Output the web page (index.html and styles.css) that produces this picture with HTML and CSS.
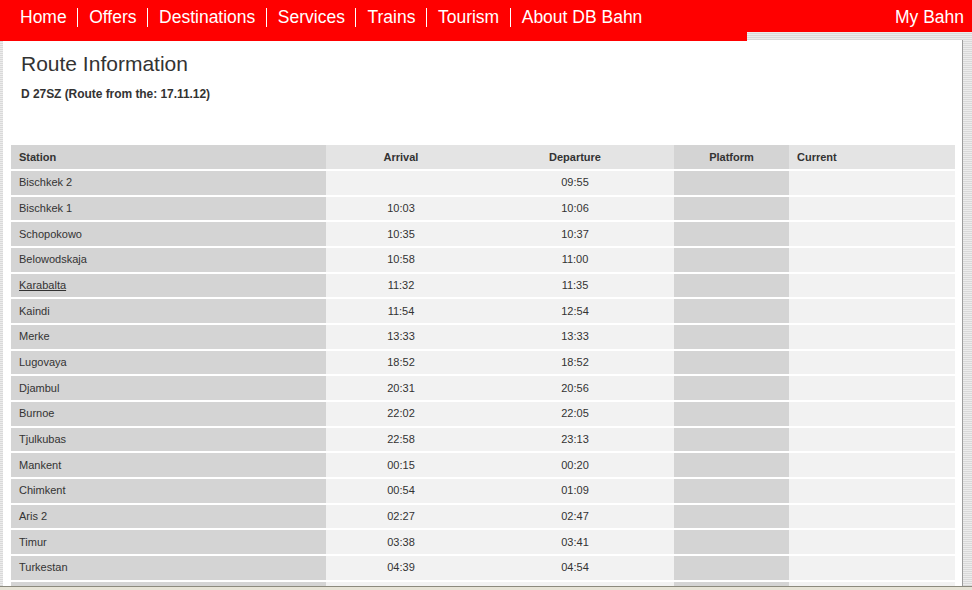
FILE: index.html
```html
<!DOCTYPE html>
<html>
<head>
<meta charset="utf-8">
<link rel="stylesheet" href="styles.css">
</head>
<body>
<div class="page">
  <header class="topbar">
    <nav class="mainnav">
      <a class="navitem">Home</a>
      <a class="navitem">Offers</a>
      <a class="navitem">Destinations</a>
      <a class="navitem">Services</a>
      <a class="navitem">Trains</a>
      <a class="navitem">Tourism</a>
      <a class="navitem last">About DB Bahn</a>
    </nav>
    <div class="usernav"><a class="navitem last">My Bahn</a></div>
  </header>
  <div class="stage">
    <div class="gutter"></div>
    <main class="panel">
      <h1 class="title">Route Information</h1>
      <p class="subtitle">D 27SZ (Route from the: 17.11.12)</p>
      <table class="route">
        <thead>
          <tr>
            <th class="c-station dark">Station</th>
            <th class="c-arr">Arrival</th>
            <th class="c-dep">Departure</th>
            <th class="c-plat dark">Platform</th>
            <th class="c-cur">Current</th>
          </tr>
        </thead>
        <tbody>
          <tr><td class="c-station dark">Bischkek 2</td><td class="c-arr"></td><td class="c-dep">09:55</td><td class="c-plat dark"></td><td class="c-cur"></td></tr>
          <tr><td class="c-station dark">Bischkek 1</td><td class="c-arr">10:03</td><td class="c-dep">10:06</td><td class="c-plat dark"></td><td class="c-cur"></td></tr>
          <tr><td class="c-station dark">Schopokowo</td><td class="c-arr">10:35</td><td class="c-dep">10:37</td><td class="c-plat dark"></td><td class="c-cur"></td></tr>
          <tr><td class="c-station dark">Belowodskaja</td><td class="c-arr">10:58</td><td class="c-dep">11:00</td><td class="c-plat dark"></td><td class="c-cur"></td></tr>
          <tr><td class="c-station dark"><a class="stationlink">Karabalta</a></td><td class="c-arr">11:32</td><td class="c-dep">11:35</td><td class="c-plat dark"></td><td class="c-cur"></td></tr>
          <tr><td class="c-station dark">Kaindi</td><td class="c-arr">11:54</td><td class="c-dep">12:54</td><td class="c-plat dark"></td><td class="c-cur"></td></tr>
          <tr><td class="c-station dark">Merke</td><td class="c-arr">13:33</td><td class="c-dep">13:33</td><td class="c-plat dark"></td><td class="c-cur"></td></tr>
          <tr><td class="c-station dark">Lugovaya</td><td class="c-arr">18:52</td><td class="c-dep">18:52</td><td class="c-plat dark"></td><td class="c-cur"></td></tr>
          <tr><td class="c-station dark">Djambul</td><td class="c-arr">20:31</td><td class="c-dep">20:56</td><td class="c-plat dark"></td><td class="c-cur"></td></tr>
          <tr><td class="c-station dark">Burnoe</td><td class="c-arr">22:02</td><td class="c-dep">22:05</td><td class="c-plat dark"></td><td class="c-cur"></td></tr>
          <tr><td class="c-station dark">Tjulkubas</td><td class="c-arr">22:58</td><td class="c-dep">23:13</td><td class="c-plat dark"></td><td class="c-cur"></td></tr>
          <tr><td class="c-station dark">Mankent</td><td class="c-arr">00:15</td><td class="c-dep">00:20</td><td class="c-plat dark"></td><td class="c-cur"></td></tr>
          <tr><td class="c-station dark">Chimkent</td><td class="c-arr">00:54</td><td class="c-dep">01:09</td><td class="c-plat dark"></td><td class="c-cur"></td></tr>
          <tr><td class="c-station dark">Aris 2</td><td class="c-arr">02:27</td><td class="c-dep">02:47</td><td class="c-plat dark"></td><td class="c-cur"></td></tr>
          <tr><td class="c-station dark">Timur</td><td class="c-arr">03:38</td><td class="c-dep">03:41</td><td class="c-plat dark"></td><td class="c-cur"></td></tr>
          <tr><td class="c-station dark">Turkestan</td><td class="c-arr">04:39</td><td class="c-dep">04:54</td><td class="c-plat dark"></td><td class="c-cur"></td></tr>
          <tr><td class="c-station dark"></td><td class="c-arr"></td><td class="c-dep"></td><td class="c-plat dark"></td><td class="c-cur"></td></tr>
        </tbody>
      </table>
    </main>
    <div class="rightedge"></div>
  </div>
  <footer class="statusbar"></footer>
</div>
</body>
</html>
```

FILE: styles.css
```css
html, body {
  margin: 0;
  padding: 0;
}
body {
  font-family: "Liberation Sans", Arial, sans-serif;
  color: #333;
  background: repeating-linear-gradient(to bottom, #ececec 0, #ececec 1px, #d9d9d9 1px, #d9d9d9 2px);
  overflow: hidden;
}
.page {
  height: 590px;
  display: flex;
  flex-direction: column;
}
.topbar {
  display: flex;
  align-items: flex-start;
  height: 40px;
  flex: 0 0 40px;
}
.mainnav {
  height: 41px;
  background: #ff0000;
  display: flex;
  align-items: flex-start;
  padding: 8px 0 0 9px;
  box-sizing: border-box;
  flex: 0 0 747px;
  position: relative;
  z-index: 1;
}
.usernav {
  flex: 1;
  height: 32px;
  background: #ff0000;
  display: flex;
  justify-content: flex-end;
  padding: 8px 0 0 0;
  box-sizing: border-box;
}
.navitem {
  color: #fff;
  font-size: 17.5px;
  line-height: 19px;
  padding: 0 10.5px 0 11px;
  border-right: 1px solid #fff;
  white-space: nowrap;
}
.navitem.last {
  border-right: 0;
}
.usernav .navitem {
  padding-right: 8px;
}
.stage {
  flex: 1;
  display: flex;
  min-height: 0;
}
.gutter {
  width: 3px;
  flex: 0 0 3px;
}
.panel {
  flex: 0 0 960px;
  width: 960px;
  background: #fff;
  overflow: hidden;
  padding: 0 8px;
  box-sizing: border-box;
  border-right: 1px solid #9c9c9c;
}
.rightedge {
  flex: 1;
}
.title {
  margin: 12px 0 0 10px;
  font-size: 21px;
  line-height: 24px;
  font-weight: normal;
  color: #333;
}
.subtitle {
  margin: 11px 0 0 10px;
  font-size: 12px;
  line-height: 14px;
  font-weight: bold;
  color: #333;
  letter-spacing: -0.05px;
}
.route {
  margin-top: 42px;
  width: 944px;
  border-collapse: separate;
  border-spacing: 0 2px;
  table-layout: fixed;
  font-size: 11px;
  color: #333;
}
.route th, .route td {
  padding: 0 8px;
  height: 23.67px;
  line-height: 13px;
  background: #f2f2f2;
  white-space: nowrap;
  box-sizing: border-box;
}
.route th {
  height: 24px;
  background: #e4e4e4;
  font-weight: bold;
}
.route .dark {
  background: #d4d4d4;
}
.c-station { width: 315px; text-align: left; }
.c-arr { width: 150px; text-align: center; }
.c-dep { width: 198px; text-align: center; }
.c-plat { width: 115px; text-align: center; }
.c-cur { width: 166px; text-align: left; }
.stationlink {
  color: #333;
  text-decoration: underline;
}
.statusbar {
  flex: 0 0 4px;
  height: 4px;
  box-sizing: border-box;
  border-top: 1px solid #8c8a7e;
  background: #e6e3d6;
}
```
